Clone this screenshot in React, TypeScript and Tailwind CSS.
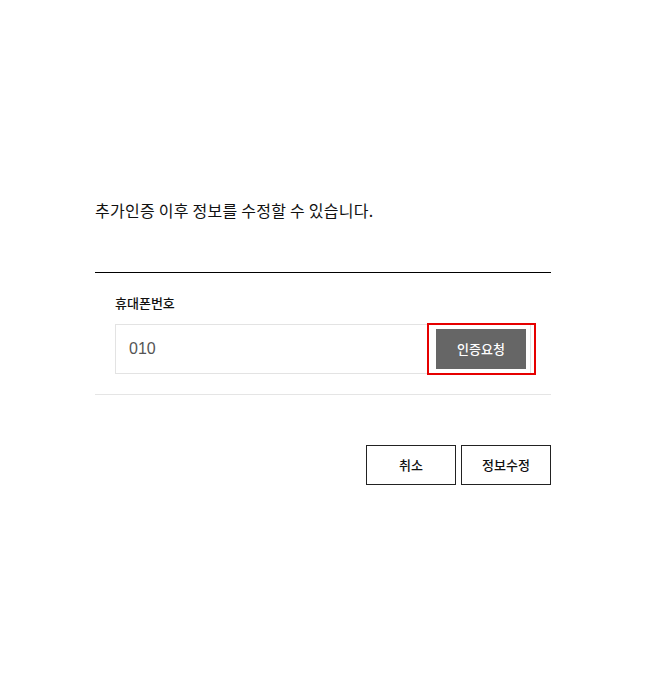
import { useState } from "react";

const font = { fontFamily: '"Noto Sans CJK KR", "Noto Sans", sans-serif' };

export default function App() {
  const [phone, setPhone] = useState("010");

  return (
    <div className="min-h-[700px] w-[650px] bg-white text-[#111]" style={font}>
      <div className="ml-[95px] w-[456px] pt-[198px]">
        <p className="text-[16px] leading-[24px] tracking-[0.25px] text-[#111]">
          추가인증 이후 정보를 수정할 수 있습니다.
        </p>

        <div className="mt-[50px] border-t border-black border-b border-b-[#e5e5e5] px-5 pt-[20px] pb-[20px]">
          <label className="block text-[13px] font-medium leading-[20px] text-[#111]">
            휴대폰번호
          </label>
          <div className="relative mt-[11px] flex h-[50px] items-center border border-[#e3e3e3] pl-[13px] pr-[4px]">
            <input
              type="text"
              value={phone}
              onChange={(e) => setPhone(e.target.value)}
              className="min-w-0 flex-1 bg-transparent text-[16px] text-[#555] outline-none"
              style={{ fontFamily: '"Liberation Sans", Arial, sans-serif' }}
            />
            <button
              type="button"
              className="h-[40px] w-[90px] bg-[#666] text-[13px] font-medium text-white"
            >
              인증요청
            </button>
            <div className="pointer-events-none absolute -top-[2px] -right-[6px] h-[52px] w-[109px] border-2 border-[#e60000]" />
          </div>
        </div>

        <div className="mt-[50px] flex justify-end gap-[5px]">
          <button
            type="button"
            className="h-[40px] w-[90px] border border-[#222] text-[13px] font-medium text-[#111]"
          >
            취소
          </button>
          <button
            type="button"
            className="h-[40px] w-[90px] border border-[#222] text-[13px] font-medium text-[#111]"
          >
            정보수정
          </button>
        </div>
      </div>
    </div>
  );
}
